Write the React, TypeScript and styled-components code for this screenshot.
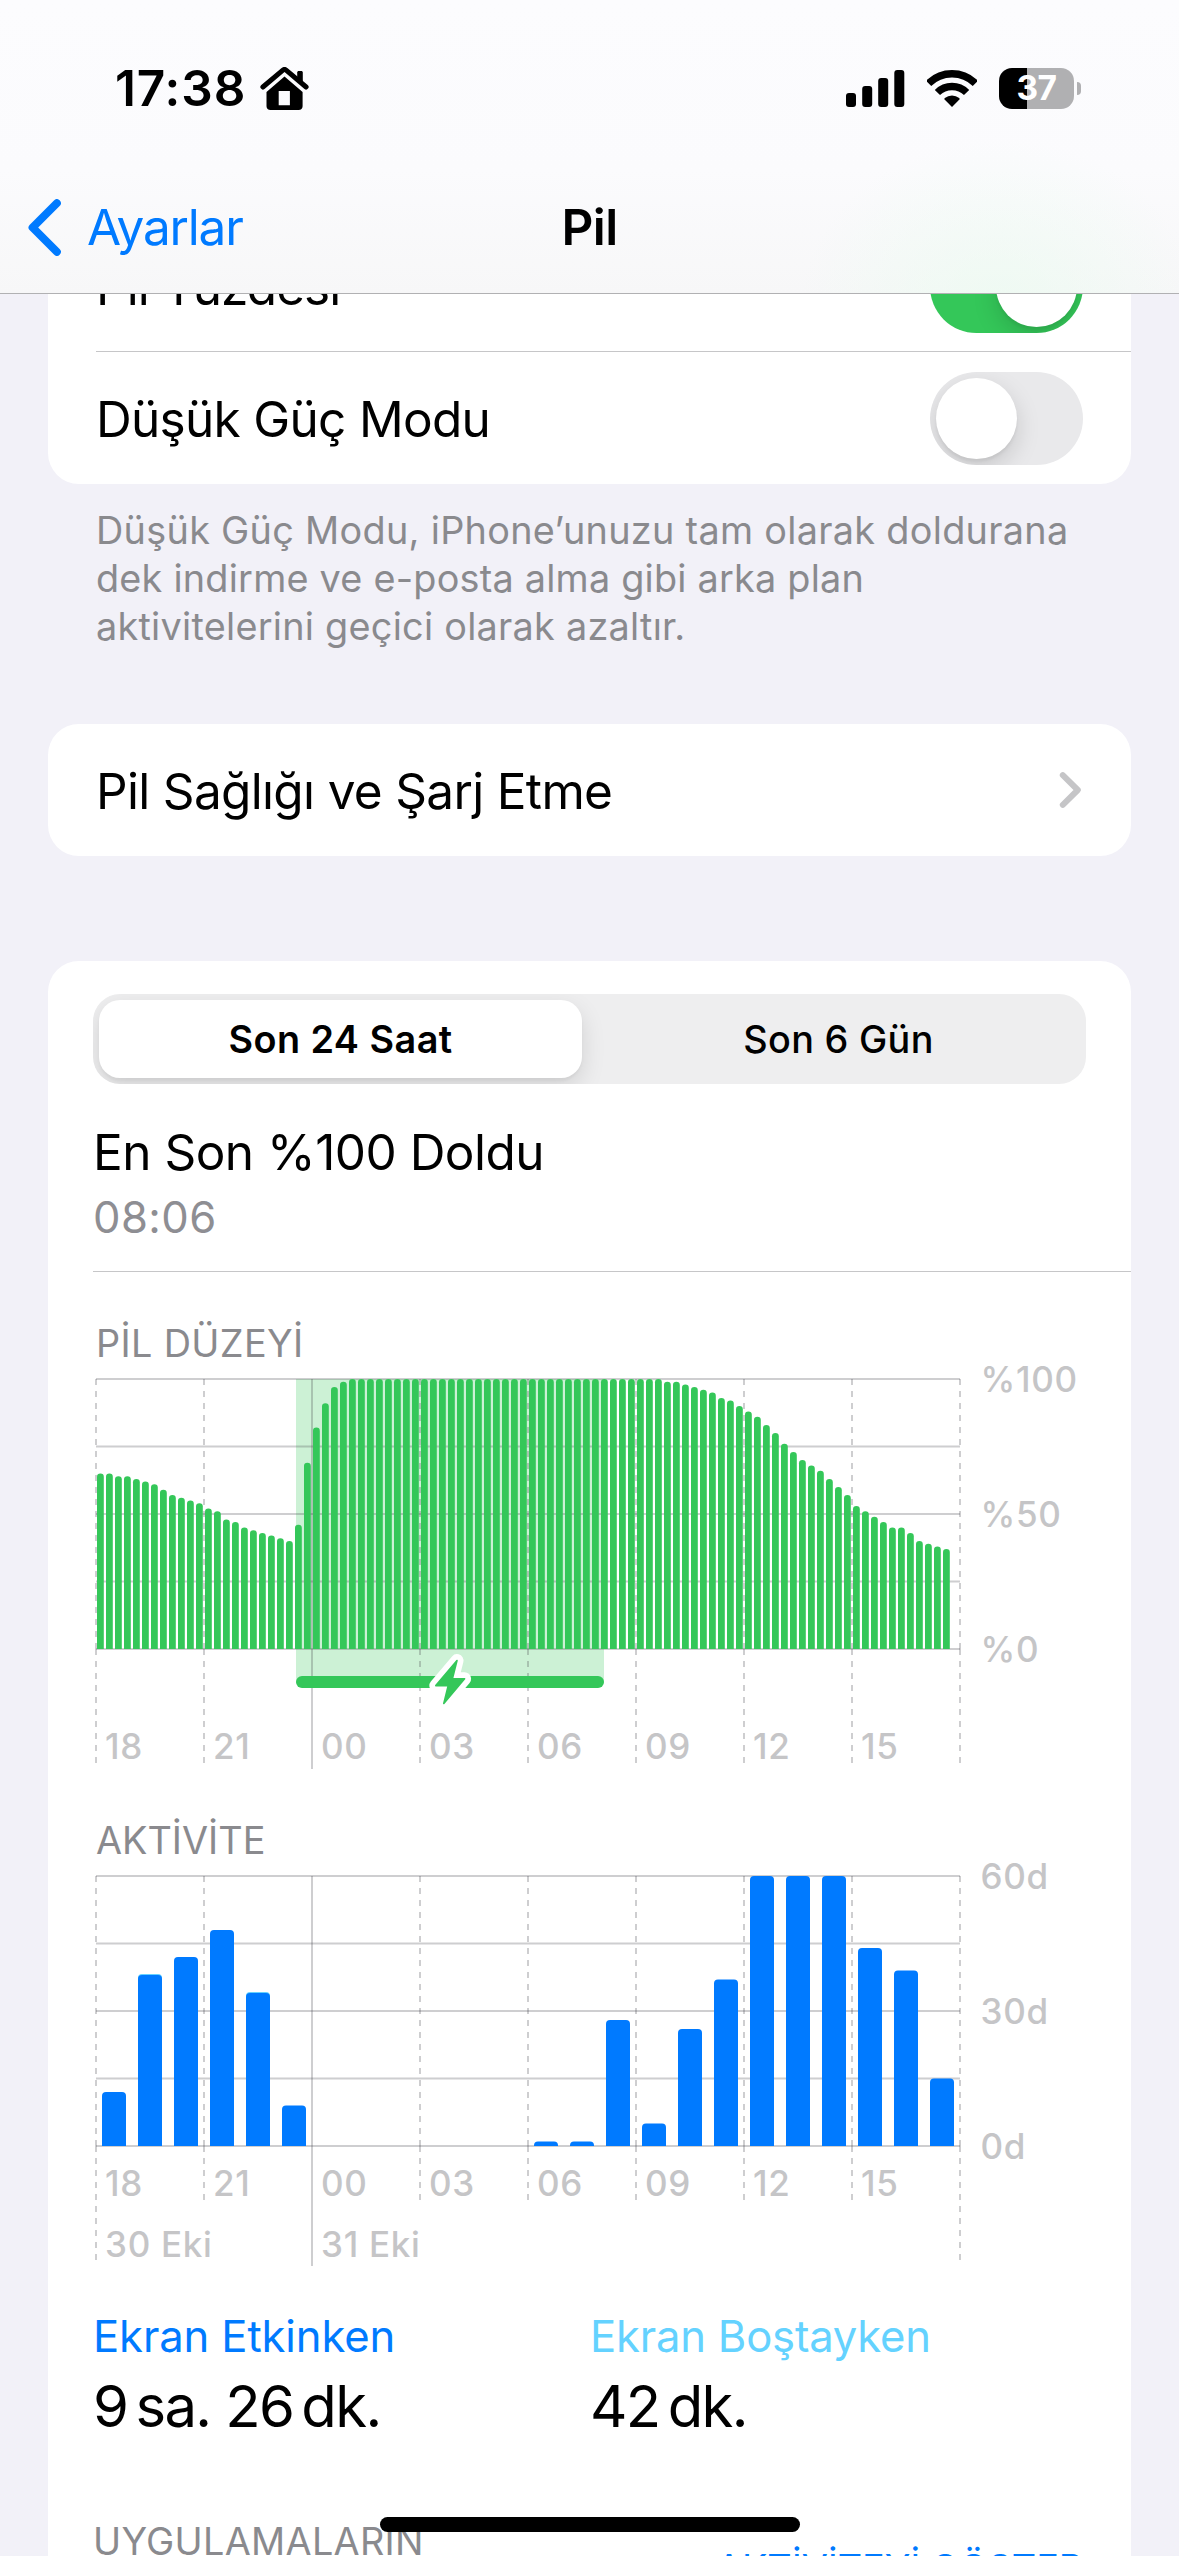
import React from "react";
import styled, { createGlobalStyle, css } from "styled-components";

const FONT = `Inter, "Liberation Sans", sans-serif`;

const color = {
  page: "#f2f1f8",
  blue: "#007aff",
  sky: "#64d2ff",
  green: "#34c759",
  grid: "#3c3c43",
  axis: "#c5c5c7",
  secondary: "#8e8e93",
  footnote: "#8a8a8e",
  hairline: "#c6c6c8",
};

const GlobalStyle = createGlobalStyle`
  * { box-sizing: border-box; }
  body { margin: 0; background: ${color.page}; }
  button { border: 0; background: none; padding: 0; font: inherit; color: inherit; }
`;

const Screen = styled.div`
  position: relative;
  display: flex;
  flex-direction: column;
  width: 1179px;
  height: 2556px;
  overflow: hidden;
  background: ${color.page};
  color: #000;
  font-family: ${FONT};
`;

/* ---------- header ---------- */

const Header = styled.header`
  flex: none;
  height: 294px;
  border-bottom: 1px solid #b1b1b3;
  background:
    radial-gradient(ellipse 200px 170px at 1000px 310px, rgba(232, 252, 238, 0.6), rgba(240, 252, 243, 0)),
    linear-gradient(#fcfcfe 0, #fbfbfd 170px, #f7f7f8 293px);
`;

const StatusBar = styled.div`
  display: flex;
  align-items: center;
  height: 176px;
  padding: 0 98px 0 115px;
`;

const Clock = styled.span`
  width: 145px;
  font-size: 49.5px;
  line-height: 60px;
  font-weight: 600;
  letter-spacing: 0.9px;
  white-space: nowrap;
`;

const StatusIcons = styled.div`
  display: flex;
  align-items: center;
  gap: 22px;
  margin-left: auto;
`;

const Battery = styled.div`
  display: flex;
  align-items: center;
  gap: 3px;
`;

const BatteryBody = styled.div<{ $level: number }>`
  display: flex;
  align-items: center;
  justify-content: center;
  width: 75px;
  height: 41px;
  border-radius: 13px;
  background: linear-gradient(90deg, #000 ${(p) => p.$level}%, #b0b0b2 ${(p) => p.$level}%);
  color: #fff;
  font-size: 33.5px;
  line-height: 41px;
  font-weight: 700;
  letter-spacing: -0.5px;
`;

const BatteryNub = styled.div`
  width: 4px;
  height: 13px;
  border-radius: 0 5px 5px 0;
  background: #b0b0b2;
`;

const NavBar = styled.nav`
  display: grid;
  grid-template-columns: 1fr auto 1fr;
  align-items: center;
  height: 102px;
  padding: 0 28px;
`;

const BackButton = styled.button`
  display: flex;
  align-items: center;
  gap: 26px;
  color: ${color.blue};
  font-size: 49.5px;
  line-height: 60px;
  letter-spacing: -1.2px;
`;

const Title = styled.h1`
  margin: 0;
  font-size: 49.5px;
  line-height: 60px;
  font-weight: 600;
  letter-spacing: -0.6px;
`;

/* ---------- lists ---------- */

const Content = styled.main`
  flex: 1;
  min-height: 0;
  overflow: hidden;
  padding: 0 48px;
`;

const Card = styled.section<{ $top: number }>`
  display: flow-root;
  margin-top: ${(p) => p.$top}px;
  border-radius: 31px;
  background: #fff;
`;

const Row = styled.div<{ $height: number }>`
  display: flex;
  align-items: center;
  justify-content: space-between;
  height: ${(p) => p.$height}px;
  padding-right: 48px;
  margin-left: 48px;
`;

const DividedRow = styled(Row)`
  border-bottom: 1px solid ${color.hairline};
`;

const RowLabel = styled.span<{ $spacing: number }>`
  padding-top: 1px;
  font-size: 49.5px;
  line-height: 60px;
  letter-spacing: ${(p) => p.$spacing}px;
  white-space: nowrap;
`;

const Switch = styled.div<{ $on?: boolean }>`
  display: flex;
  justify-content: ${(p) => (p.$on ? "flex-end" : "flex-start")};
  width: 153px;
  height: 93px;
  padding: 6px;
  overflow: hidden;
  border-radius: 47px;
  background: ${(p) => (p.$on ? color.green : "#e9e9eb")};
`;

const Knob = styled.div`
  width: 81px;
  height: 81px;
  border-radius: 50%;
  background: #fff;
  box-shadow: 0 9px 24px rgba(0, 0, 0, 0.15), 0 3px 3px rgba(0, 0, 0, 0.05);
`;

const Footnote = styled.p`
  margin: 0;
  padding: 22px 48px 0;
  color: ${color.footnote};
  font-size: 37.8px;
  line-height: 48px;
`;

const FootnoteLine = styled.span<{ $spacing: number }>`
  display: block;
  letter-spacing: ${(p) => p.$spacing}px;
  white-space: nowrap;
`;

/* ---------- usage card ---------- */

const Segmented = styled.div`
  display: flex;
  gap: 15px;
  height: 90px;
  margin: 33px 45px 0;
  padding: 6px;
  overflow: hidden;
  border-radius: 27px;
  background: #eeeeef;
`;

const Segment = styled.button<{ $active?: boolean; $spacing: number }>`
  flex: 1;
  border-radius: 21px;
  font-size: 37.8px;
  line-height: 78px;
  font-weight: 500;
  letter-spacing: ${(p) => p.$spacing}px;
  ${(p) =>
    p.$active &&
    css`
      background: #fff;
      font-weight: 600;
      box-shadow: 0 9px 24px rgba(0, 0, 0, 0.12), 0 3px 3px rgba(0, 0, 0, 0.04);
    `}
`;

const LastCharge = styled.div`
  margin: 38px 0 0 45px;
  padding-bottom: 26px;
  border-bottom: 1px solid ${color.hairline};
`;

const ChargeTitle = styled.div`
  font-size: 49.5px;
  line-height: 60px;
  letter-spacing: -0.5px;
`;

const ChargeTime = styled.div`
  margin-top: 9px;
  color: ${color.secondary};
  font-size: 43.6px;
  line-height: 54px;
  letter-spacing: 0.4px;
`;

const SectionLabel = styled.h2<{ $top: number; $spacing: number }>`
  margin: ${(p) => p.$top}px 0 0 48px;
  color: ${color.footnote};
  font-size: 37.8px;
  line-height: 48px;
  font-weight: 400;
  letter-spacing: ${(p) => p.$spacing}px;
`;

const Chart = styled.svg`
  display: block;
  width: 1083px;
  height: 410px;
  overflow: visible;
`;

const AxisText = styled.text`
  fill: ${color.axis};
  font-family: ${FONT};
  font-size: 35px;
  font-weight: 500;
  letter-spacing: 0.7px;
`;

const Totals = styled.div`
  display: grid;
  grid-template-columns: 497px 1fr;
  margin: 36px 45px 0;
`;

const TotalLabel = styled.div<{ $color: string; $spacing: number }>`
  color: ${(p) => p.$color};
  font-size: 43.6px;
  line-height: 54px;
  letter-spacing: ${(p) => p.$spacing}px;
`;

const TotalValue = styled.div`
  margin-top: 7px;
  font-size: 58px;
  line-height: 70px;
  letter-spacing: -1.6px;
  white-space: nowrap;
`;

const Unit = styled.span`
  margin-left: 8px;
`;

const ListHeader = styled.div`
  display: flex;
  justify-content: space-between;
  margin: 76px 48px 0 45px;
  font-size: 37.8px;
  line-height: 48px;
`;

const ListTitle = styled.span`
  color: ${color.footnote};
  letter-spacing: 0.3px;
`;

const ListAction = styled.button`
  padding-top: 27px;
  color: ${color.blue};
  letter-spacing: -0.1px;
`;

const HomeIndicator = styled.div`
  position: absolute;
  left: 380px;
  bottom: 24px;
  width: 420px;
  height: 15px;
  border-radius: 8px;
  background: #000;
`;

/* ---------- icons ---------- */

const HouseIcon = () => (
  <svg width="49" height="43" viewBox="0 0 49 43">
    <path d="M37.2 5.5c0-1 .6-1.6 1.6-1.6h2.4c1 0 1.6.6 1.6 1.6V17l-5.6-5z" />
    <path d="M2.9 20 22.9 3.1q1.6-1.3 3.2 0L46.1 20" fill="none" stroke="#000" strokeWidth="5" strokeLinecap="round" />
    <path
      fillRule="evenodd"
      d="M24.5 9.6 42.6 25v14.2c0 2.4-1.6 3.8-4 3.8H10.5c-2.4 0-4-1.4-4-3.8V25zM18.7 24v14.2h11.2V24z"
    />
  </svg>
);

const SignalIcon = () => (
  <svg width="59" height="37" viewBox="0 0 59 37">
    <rect x="0" y="23" width="10" height="14" rx="3" />
    <rect x="16.2" y="16" width="10" height="21" rx="3" />
    <rect x="32.2" y="8" width="10" height="29" rx="3" />
    <rect x="48.3" y="0" width="10" height="37" rx="3" />
  </svg>
);

const WifiIcon = () => (
  <svg width="50" height="37" viewBox="0 0 50 37">
    <g fill="none" stroke="#000">
      <path d="M1.6 13.4A33.25 33.25 0 0 1 48.4 13.4" strokeWidth="7.5" />
      <path d="M10.4 22.5A20.6 20.6 0 0 1 39.6 22.5" strokeWidth="7.4" />
    </g>
    <path d="M25 37 17.6 29.5q-.6-.8.2-1.5a11.6 11.6 0 0 1 14.4 0q.8.7.2 1.5z" />
  </svg>
);

const BackIcon = () => (
  <svg width="33" height="57" viewBox="0 0 33 57">
    <path
      d="M28.8 4.2 4.6 28.5 28.8 52.8"
      fill="none"
      stroke={color.blue}
      strokeWidth="8"
      strokeLinecap="round"
      strokeLinejoin="round"
    />
  </svg>
);

const DisclosureIcon = () => (
  <svg width="24" height="36" viewBox="0 0 24 36">
    <path
      d="M3.8 3.2 18.8 18 3.8 32.8"
      fill="none"
      stroke={color.axis}
      strokeWidth="6"
      strokeLinecap="round"
      strokeLinejoin="round"
    />
  </svg>
);

/* ---------- charts ---------- */

const PLOT_LEFT = 48;
const PLOT_RIGHT = 912;
const PLOT_TOP = 12;
const PLOT_BOTTOM = 282;
const PLOT_HEIGHT = PLOT_BOTTOM - PLOT_TOP;
const COLUMN = 108;
const HOURS = ["18", "21", "00", "03", "06", "09", "12", "15"];
const MIDNIGHT = 2;

const levels = [
  65, 65, 64, 64, 63, 62, 61, 59, 57, 56, 55, 54, 52, 51, 48, 47, 45, 44, 43, 42, 41, 40, 46, 69, 82, 91, 97, 99,
  ...Array<number>(35).fill(100),
  99, 99, 98, 97, 96, 95, 93, 92, 90, 88, 86, 83, 80, 76, 73, 70, 68, 66, 63, 60, 57, 53, 51, 49, 47, 45, 45, 43, 40,
  39, 38, 37,
];

const activity = [12, 38, 42, 48, 34, 9, 0, 0, 0, 0, 0, 0, 1, 1, 28, 5, 26, 37, 60, 60, 60, 44, 39, 15];
const idleHours = [1, 4];

type GridProps = { tail: number; edgeTail: number; hourY: number; scale: string[] };

const Grid = ({ tail, edgeTail, hourY, scale }: GridProps) => (
  <>
    <g stroke={color.grid} strokeOpacity="0.25" strokeWidth="2">
      {[0, 1, 2, 3, 4].map((i) => {
        const y = PLOT_TOP + (PLOT_HEIGHT / 4) * i;
        return <line key={i} x1={PLOT_LEFT} x2={PLOT_RIGHT} y1={y} y2={y} />;
      })}
      {Array.from({ length: 9 }, (_, i) => {
        const x = PLOT_LEFT + COLUMN * i;
        if (i === MIDNIGHT) return <line key={i} x1={x} x2={x} y1={PLOT_TOP} y2={402} />;
        const end = PLOT_BOTTOM + (i === 0 || i === 8 ? edgeTail : tail);
        return (
          <g key={i} strokeDasharray="6 6">
            <line x1={x} x2={x} y1={PLOT_TOP} y2={PLOT_BOTTOM} />
            <line x1={x} x2={x} y1={PLOT_BOTTOM} y2={end} />
          </g>
        );
      })}
    </g>
    {HOURS.map((h, i) => (
      <AxisText key={h} x={PLOT_LEFT + COLUMN * i + 9} y={hourY}>
        {h}
      </AxisText>
    ))}
    {scale.map((s, i) => (
      <AxisText key={s} x={932.5} y={PLOT_TOP + 13 + (PLOT_HEIGHT / 2) * i}>
        {s}
      </AxisText>
    ))}
  </>
);

const BOLT = "M409 293.6 387.8 318.6H400.2L395.8 336.4 416.6 311.8H404.4z";

const BatteryChart = () => (
  <Chart viewBox="0 0 1083 410">
    <rect x="248" y={PLOT_TOP} width="308" height="304" fill={color.green} fillOpacity="0.25" />
    <Grid tail={114} edgeTail={114} hourY={392} scale={["%100", "%50", "%0"]} />
    <g fill={color.green}>
      {levels.map((v, i) => {
        const x = 49 + i * 9;
        const top = PLOT_BOTTOM - v * 2.7;
        return <path key={i} d={`M${x} ${PLOT_BOTTOM}V${top + 3.3}a3.4 3.3 0 0 1 6.8 0V${PLOT_BOTTOM}z`} />;
      })}
      <rect x="248" y="309" width="308" height="12" rx="6" />
      <path d={BOLT} stroke="#fff" strokeWidth="13" strokeLinejoin="round" />
      <path d={BOLT} stroke={color.green} strokeWidth="1.6" strokeLinejoin="round" />
    </g>
  </Chart>
);

const roundedBar = (x: number, top: number) =>
  `M${x} ${PLOT_BOTTOM}V${top + 4}q0-4 4-4h16q4 0 4 4V${PLOT_BOTTOM}z`;

const ActivityChart = () => (
  <Chart viewBox="0 0 1083 410">
    <Grid tail={54} edgeTail={114} hourY={332} scale={["60d", "30d", "0d"]} />
    <AxisText x={57} y={393}>
      30 Eki
    </AxisText>
    <AxisText x={273} y={393}>
      31 Eki
    </AxisText>
    {activity.map((v, i) => {
      if (!v) return null;
      const top = PLOT_BOTTOM - v * 4.5;
      const x = 54 + i * 36;
      return (
        <g key={i}>
          {idleHours.includes(i) && <path d={roundedBar(x, top - 1)} fill={color.sky} />}
          <path d={roundedBar(x, top)} fill={color.blue} />
        </g>
      );
    })}
  </Chart>
);

/* ---------- page ---------- */

export default function App() {
  return (
    <Screen>
      <GlobalStyle />
      <Header>
        <StatusBar>
          <Clock>17:38</Clock>
          <HouseIcon />
          <StatusIcons>
            <SignalIcon />
            <WifiIcon />
            <Battery>
              <BatteryBody $level={37}>37</BatteryBody>
              <BatteryNub />
            </Battery>
          </StatusIcons>
        </StatusBar>
        <NavBar>
          <BackButton>
            <BackIcon />
            Ayarlar
          </BackButton>
          <Title>Pil</Title>
        </NavBar>
      </Header>

      <Content>
        <Card $top={-73}>
          <DividedRow $height={131}>
            <RowLabel $spacing={-0.9}>Pil Yüzdesi</RowLabel>
            <Switch $on>
              <Knob />
            </Switch>
          </DividedRow>
          <Row $height={132}>
            <RowLabel $spacing={-0.7}>Düşük Güç Modu</RowLabel>
            <Switch>
              <Knob />
            </Switch>
          </Row>
        </Card>
        <Footnote>
          <FootnoteLine $spacing={0.3}>Düşük Güç Modu, iPhone’unuzu tam olarak doldurana</FootnoteLine>
          <FootnoteLine $spacing={0.22}>dek indirme ve e-posta alma gibi arka plan</FootnoteLine>
          <FootnoteLine $spacing={0.26}>aktivitelerini geçici olarak azaltır.</FootnoteLine>
        </Footnote>

        <Card $top={74}>
          <Row $height={132}>
            <RowLabel $spacing={-0.67}>Pil Sağlığı ve Şarj Etme</RowLabel>
            <DisclosureIcon />
          </Row>
        </Card>

        <Card $top={105}>
          <Segmented>
            <Segment $active $spacing={0.45}>
              Son 24 Saat
            </Segment>
            <Segment $spacing={0.3}>Son 6 Gün</Segment>
          </Segmented>
          <LastCharge>
            <ChargeTitle>En Son %100 Doldu</ChargeTitle>
            <ChargeTime>08:06</ChargeTime>
          </LastCharge>

          <SectionLabel $top={47} $spacing={0.35}>
            PİL DÜZEYİ
          </SectionLabel>
          <BatteryChart />

          <SectionLabel $top={39} $spacing={0}>
            AKTİVİTE
          </SectionLabel>
          <ActivityChart />

          <Totals>
            <div>
              <TotalLabel $color={color.blue} $spacing={-0.12}>
                Ekran Etkinken
              </TotalLabel>
              <TotalValue>
                9<Unit>sa.</Unit> 26<Unit>dk.</Unit>
              </TotalValue>
            </div>
            <div>
              <TotalLabel $color={color.sky} $spacing={-0.2}>
                Ekran Boştayken
              </TotalLabel>
              <TotalValue>
                42<Unit>dk.</Unit>
              </TotalValue>
            </div>
          </Totals>

          <ListHeader>
            <ListTitle>UYGULAMALARIN</ListTitle>
            <ListAction>AKTİVİTEYİ GÖSTER</ListAction>
          </ListHeader>
        </Card>
      </Content>
      <HomeIndicator />
    </Screen>
  );
}
